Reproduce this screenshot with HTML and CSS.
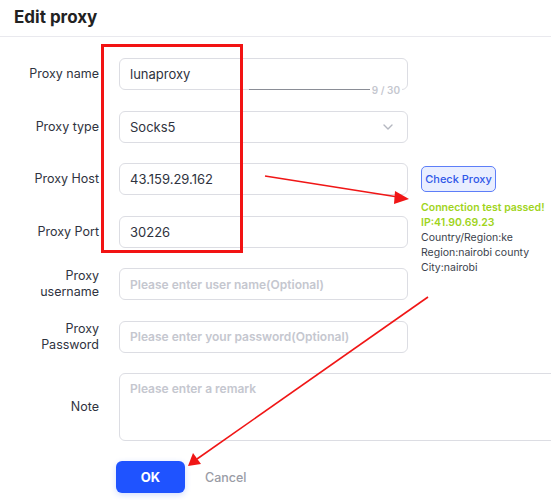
FILE: index.html
```html
<!DOCTYPE html>
<html>
<head>
<meta charset="utf-8">
<link rel="stylesheet" href="styles.css">
</head>
<body>
<div class="dialog">
  <div class="header"><h1 class="title">Edit proxy</h1></div>
  <div class="form">
    <label class="label">Proxy name</label>
    <div class="field counter-field">
      <div class="input">lunaproxy</div>
      <span class="focus-line"></span>
      <span class="counter">9 / 30</span>
    </div>
    <div class="empty"></div>

    <label class="label">Proxy type</label>
    <div class="field"><div class="input select">Socks5
      <svg class="chev" width="10" height="6" viewBox="0 0 10 6"><path d="M1 1l4 4 4-4" fill="none" stroke="#b4b7c0" stroke-width="1.4" stroke-linecap="round" stroke-linejoin="round"/></svg>
    </div></div>
    <div class="empty"></div>

    <label class="label">Proxy Host</label>
    <div class="field"><div class="input">43.159.29.162</div></div>
    <div class="check">
      <button class="check-btn">Check Proxy</button>
      <div class="result">
        <div class="ok">Connection test passed!</div>
        <div class="ok">IP:41.90.69.23</div>
        <div>Country/Region:ke</div>
        <div>Region:nairobi county</div>
        <div>City:nairobi</div>
      </div>
    </div>

    <label class="label">Proxy Port</label>
    <div class="field"><div class="input">30226</div></div>

    <label class="label two">Proxy<br>username</label>
    <div class="field"><div class="input ph">Please enter user name(Optional)</div></div>

    <label class="label two">Proxy<br>Password</label>
    <div class="field"><div class="input ph">Please enter your password(Optional)</div></div>
    <div class="empty"></div>

    <label class="label note-label">Note</label>
    <div class="field wide"><div class="input textarea ph">Please enter a remark</div></div>
  </div>
  <div class="actions">
    <button class="btn-ok">OK</button>
    <button class="btn-cancel">Cancel</button>
  </div>
</div>
<div class="redbox"></div>
<svg class="arrows" width="551" height="500" viewBox="0 0 551 500">
  <line x1="265" y1="176" x2="398" y2="197" stroke="#f01616" stroke-width="1.6"/>
  <path d="M409 199 L395 191 L394 204 Z" fill="#f01616"/>
  <line x1="428" y1="297" x2="197" y2="459" stroke="#f01616" stroke-width="1.6"/>
  <path d="M188 466 L193 453 L201 464 Z" fill="#f01616"/>
</svg>
</body>
</html>
```
FILE: styles.css
```css
html, body {
  margin: 0;
  padding: 0;
  background: #fff;
  width: 551px;
  height: 500px;
  overflow: hidden;
  font-family: Inter, "Open Sans", sans-serif;
  color: #2f3340;
}
.dialog {
  position: relative;
}
.header {
  height: 37px;
  border-bottom: 1px solid #e9e9ee;
  box-sizing: border-box;
  display: flex;
  align-items: center;
  padding-left: 14px;
}
.title {
  margin: 0;
  font-size: 17px;
  font-weight: 700;
  color: #222;
  position: relative;
  top: -1px;
}
.form {
  display: grid;
  grid-template-columns: 99px 309px 143px;
  grid-template-rows: repeat(6, 32px) 68px;
  row-gap: 20.5px;
  padding-top: 21px;
}
.label {
  font-size: 12.5px;
  text-align: right;
  align-self: center;
  line-height: 16px;
  color: #2f3340;
}
.field {
  margin-left: 20px;
  width: 289px;
  position: relative;
}
.input {
  height: 32px;
  box-sizing: border-box;
  border: 1px solid #dcdde3;
  border-radius: 6px;
  padding: 0 10px;
  display: flex;
  align-items: center;
  font-size: 13px;
  color: #2f3340;
  background: #fff;
}
.select {
  justify-content: space-between;
}
.chev { margin-right: 4px; }
.ph {
  color: #c5c7cf;
  font-weight: 600;
  font-size: 12px;
}
.focus-line {
  position: absolute;
  left: 130px;
  right: 38px;
  bottom: 0;
  height: 1px;
  background: #8a8d96;
}
.counter {
  position: absolute;
  right: 6px;
  bottom: -6px;
  font-size: 10px;
  font-weight: 600;
  color: #c5c7cf;
  background: #fff;
  padding: 0 2px;
  line-height: 12px;
}
.check {
  grid-row: 3 / span 3;
  grid-column: 3;
  align-self: start;
  padding-left: 13px;
  padding-top: 3px;
}
.check-btn {
  display: block;
  height: 26px;
  width: 75px;
  box-sizing: border-box;
  border: 1px solid #5d7ef8;
  background: #e9eeff;
  color: #2f57e8;
  border-radius: 5px;
  font-family: inherit;
  font-size: 11px;
  font-weight: 500;
  padding: 0;
}
.result {
  margin-top: 8px;
  font-size: 10.5px;
  line-height: 15px;
  color: #3b3f4c;
  white-space: nowrap;
}
.result .ok {
  color: #9fd41c;
  font-weight: 600;
}
.form > .wide {
  grid-column: 2 / span 2;
  width: 480px;
  height: 68px;
}
.textarea {
  height: 68px;
  align-items: flex-start;
  padding-top: 7px;
}
.actions {
  display: flex;
  align-items: center;
  padding-left: 116px;
  padding-top: 20px;
  gap: 20px;
}
.btn-ok {
  width: 69px;
  height: 32px;
  border: none;
  border-radius: 6px;
  background: #1f53ff;
  color: #fff;
  font-family: inherit;
  font-weight: 700;
  font-size: 13px;
  box-shadow: 0 2px 6px rgba(31, 83, 255, 0.2);
}
.btn-cancel {
  border: none;
  background: none;
  color: #9a9ca6;
  font-family: inherit;
  font-size: 12.5px;
  font-weight: 500;
  padding: 0;
}
.redbox {
  position: absolute;
  left: 101px;
  top: 44px;
  width: 142px;
  height: 209px;
  box-sizing: border-box;
  border: 3px solid #f21313;
}
.arrows {
  position: absolute;
  left: 0;
  top: 0;
  pointer-events: none;
}
```
